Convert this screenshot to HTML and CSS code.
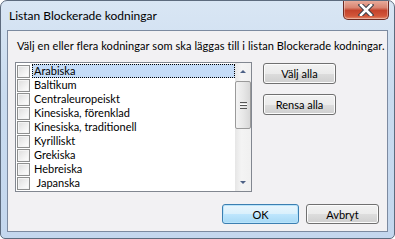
FILE: index.html
```html
<!DOCTYPE html>
<html lang="sv">
<head>
  <meta charset="UTF-8" />
  <title>Listan Blockerade kodningar</title>
  <link rel="stylesheet" href="styles.css">
</head>
<body>
  <div class="window">
    <div class="titlebar">
      <span class="title">Listan Blockerade kodningar</span>
      <button class="close" aria-label="Stäng">
        <svg width="16" height="12" viewBox="0 0 16 12">
          <path d="M3 1 L13 11 M13 1 L3 11" stroke="#3b3f48" stroke-width="4.6" stroke-linecap="square"/>
          <path d="M3 1 L13 11 M13 1 L3 11" stroke="#fff" stroke-width="2.6" stroke-linecap="square"/>
        </svg>
      </button>
    </div>

    <div class="client">
      <p class="intro">Välj en eller flera kodningar som ska läggas till i listan Blockerade kodningar.</p>

      <div class="middle">
        <div class="listbox">
          <ul class="items">
            <li class="item selected"><span class="check"></span><span class="label">Arabiska</span></li>
            <li class="item"><span class="check"></span><span class="label">Baltikum</span></li>
            <li class="item"><span class="check"></span><span class="label">Centraleuropeiskt</span></li>
            <li class="item"><span class="check"></span><span class="label">Kinesiska, förenklad</span></li>
            <li class="item"><span class="check"></span><span class="label">Kinesiska, traditionell</span></li>
            <li class="item"><span class="check"></span><span class="label">Kyrilliskt</span></li>
            <li class="item"><span class="check"></span><span class="label">Grekiska</span></li>
            <li class="item"><span class="check"></span><span class="label">Hebreiska</span></li>
            <li class="item"><span class="check"></span><span class="label"> Japanska</span></li>
          </ul>
          <div class="scrollbar">
            <div class="arrow up"></div>
            <div class="track">
              <div class="thumb"><span class="grip"></span></div>
            </div>
            <div class="arrow down"></div>
          </div>
        </div>

        <div class="side-buttons">
          <button class="btn">Välj alla</button>
          <button class="btn">Rensa alla</button>
        </div>
      </div>

      <div class="footer">
        <button class="btn default">OK</button>
        <button class="btn">Avbryt</button>
      </div>
    </div>
  </div>
</body>
</html>
```

FILE: styles.css
```css
html, body {
  margin: 0;
  padding: 0;
  background: #fff;
}
body {
  font-family: Lato, 'Noto Sans', sans-serif;
  font-size: 11px;
  color: #000;
}
.window {
  width: 395px;
  height: 239px;
  box-sizing: border-box;
  border: 1px solid #5d6b7e;
  border-radius: 7px 7px 5px 5px;
  background: linear-gradient(180deg, #d9e6f4 0%, #c9dbef 40%, #c4d7ee 100%);
  display: flex;
  flex-direction: column;
  overflow: hidden;
}
/* Title bar */
.titlebar {
  height: 29px;
  display: flex;
  justify-content: space-between;
  align-items: flex-start;
}
.title {
  margin: 7px 0 0 8px;
  font-size: 12px;
  line-height: 15px;
  color: #000;
}
.close {
  width: 46px;
  height: 20px;
  margin: -1px 5px 0 0;
  padding: 0;
  border: 1px solid #6d2a22;
  border-top: none;
  border-radius: 0 0 5px 5px;
  background: linear-gradient(180deg, #eab0a0 0%, #d98572 40%, #c4432c 55%, #d2563a 85%, #e48f70 100%);
  box-shadow: inset 0 0 0 1px rgba(255,255,255,0.35);
  display: flex;
  align-items: center;
  justify-content: center;
}
/* Client area */
.client {
  flex: 1;
  margin: 0 6px 6px 6px;
  border: 1px solid #7c8aa0;
  background: #f2f1f3;
  display: flex;
  flex-direction: column;
  padding: 0 7px 7px 7px;
}
.intro {
  margin: 7px 0 0 2px;
  line-height: 15px;
  letter-spacing: 0.07px;
  white-space: nowrap;
}
.middle {
  display: flex;
  margin-top: 9px;
}
.listbox {
  width: 237px;
  height: 130px;
  box-sizing: border-box;
  border: 1px solid #828790;
  background: #fff;
  display: flex;
}
.items {
  list-style: none;
  margin: 0;
  padding: 1px 0 0 1px;
  flex: 1;
}
.item {
  height: 14px;
  display: flex;
  align-items: center;
}
.check {
  width: 11px;
  height: 11px;
  border: 1px solid #8e8f8f;
  background: linear-gradient(135deg, #dcdcdc 0%, #f2f2f2 60%, #fff 100%);
  box-shadow: inset 0 0 0 1px #f4f4f4;
  flex: none;
}
.label {
  margin-left: 2px;
  padding: 0 1px;
  height: 14px;
  box-sizing: border-box;
  line-height: 12px;
  white-space: pre;
  flex: 1;
  border: 1px solid transparent;
}
.item.selected .label {
  background: #c5dcf7;
  border: 1px dotted #000;
}
/* Scrollbar */
.scrollbar {
  width: 16px;
  background: linear-gradient(90deg, #e6e6e6, #f4f4f4 40%, #f0f0f0);
  display: flex;
  flex-direction: column;
}
.arrow {
  height: 17px;
  display: flex;
  align-items: center;
  justify-content: center;
}
.arrow::after {
  content: '';
  width: 0;
  height: 0;
  border-left: 3px solid transparent;
  border-right: 3px solid transparent;
}
.arrow.up::after {
  border-bottom: 3px solid #4d6185;
}
.arrow.down::after {
  border-top: 3px solid #4d6185;
}
.track {
  flex: 1;
  padding: 1px 0;
}
.thumb {
  height: 46px;
  border: 1px solid #9a9a9a;
  border-radius: 2px;
  background: linear-gradient(90deg, #f3f3f3, #e8e8e8 50%, #d8d8d8);
  display: flex;
  align-items: center;
  justify-content: center;
}
.grip {
  width: 7px;
  height: 5px;
  border-top: 1px solid #555;
  border-bottom: 1px solid #555;
  background: linear-gradient(#fff 0, #fff 1px, #555 1px, #555 2px, transparent 2px) 0 1px / 7px 3px no-repeat;
}
/* Buttons */
.side-buttons {
  display: flex;
  flex-direction: column;
  gap: 10px;
  margin: 1px 0 0 11px;
}
.btn {
  width: 73px;
  height: 21px;
  padding: 0;
  font: inherit;
  font-weight: 400;
  color: #000;
  border: 1px solid #707070;
  border-radius: 3px;
  background: linear-gradient(180deg, #f2f2f2 0%, #ebebeb 50%, #dddddd 51%, #cfcfcf 100%);
  box-shadow: inset 0 0 0 1px #fcfcfc;
}
.btn.default {
  width: 77px;
  border-color: #3c7fb1;
  background: linear-gradient(180deg, #eaf6fd 0%, #d9f0fc 50%, #bee6fd 51%, #a7d9f5 100%);
  box-shadow: inset 0 0 0 1px #b9e4fb;
}
.footer {
  margin-top: auto;
  display: flex;
  justify-content: flex-end;
  gap: 7px;
  padding-right: 1px;
}
.footer .btn {
  height: 20px;
}
```
